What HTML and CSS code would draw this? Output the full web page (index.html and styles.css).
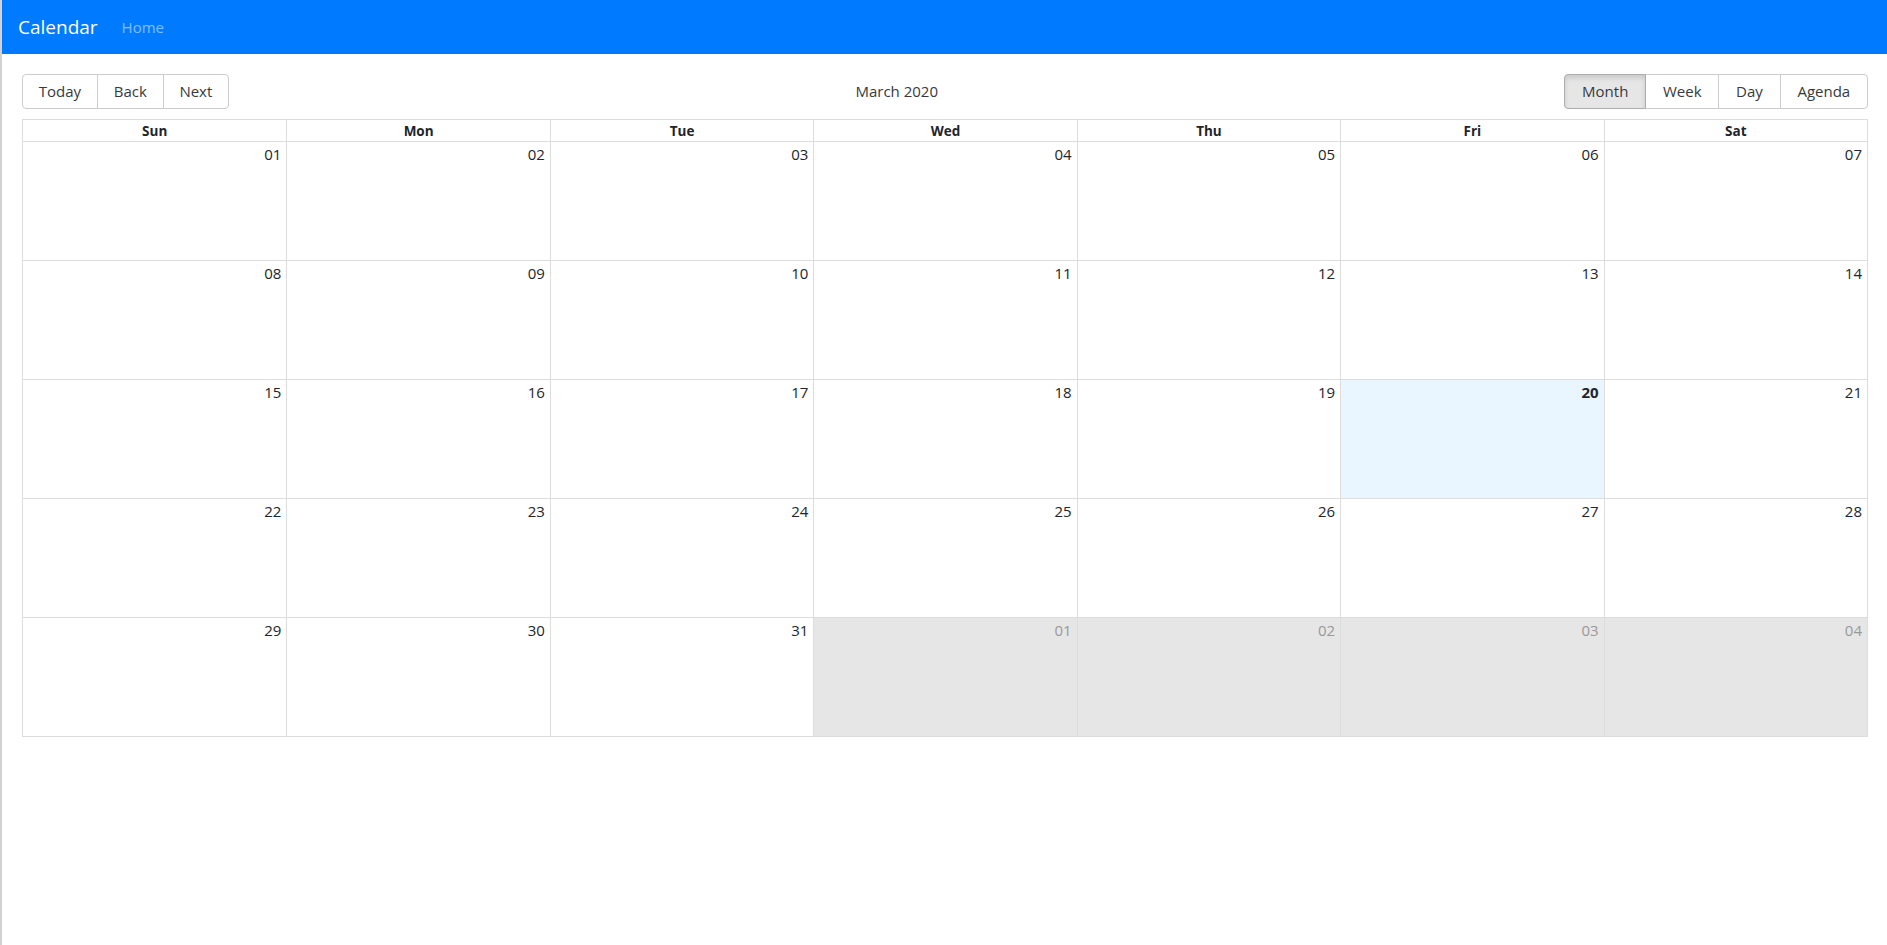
FILE: index.html
```html
<!DOCTYPE html>
<html lang="en">
<head>
<meta charset="utf-8">
<title>Calendar</title>
<link rel="stylesheet" href="styles.css">
</head>
<body>
<nav class="navbar">
  <a class="brand" href="#">Calendar</a>
  <a class="nav-link" href="#">Home</a>
</nav>
<main class="page">
  <div class="toolbar">
    <div class="btn-group">
      <button type="button">Today</button>
      <button type="button">Back</button>
      <button type="button">Next</button>
    </div>
    <span class="toolbar-label">March 2020</span>
    <div class="btn-group views">
      <button type="button" class="active">Month</button>
      <button type="button">Week</button>
      <button type="button">Day</button>
      <button type="button">Agenda</button>
    </div>
  </div>
  <div class="month">
    <div class="month-header">
      <div class="header">Sun</div>
      <div class="header">Mon</div>
      <div class="header">Tue</div>
      <div class="header">Wed</div>
      <div class="header">Thu</div>
      <div class="header">Fri</div>
      <div class="header">Sat</div>
    </div>
    <div class="month-row">
      <div class="day"><span class="date">01</span></div>
      <div class="day"><span class="date">02</span></div>
      <div class="day"><span class="date">03</span></div>
      <div class="day"><span class="date">04</span></div>
      <div class="day"><span class="date">05</span></div>
      <div class="day"><span class="date">06</span></div>
      <div class="day"><span class="date">07</span></div>
    </div>
    <div class="month-row">
      <div class="day"><span class="date">08</span></div>
      <div class="day"><span class="date">09</span></div>
      <div class="day"><span class="date">10</span></div>
      <div class="day"><span class="date">11</span></div>
      <div class="day"><span class="date">12</span></div>
      <div class="day"><span class="date">13</span></div>
      <div class="day"><span class="date">14</span></div>
    </div>
    <div class="month-row">
      <div class="day"><span class="date">15</span></div>
      <div class="day"><span class="date">16</span></div>
      <div class="day"><span class="date">17</span></div>
      <div class="day"><span class="date">18</span></div>
      <div class="day"><span class="date">19</span></div>
      <div class="day today"><span class="date now">20</span></div>
      <div class="day"><span class="date">21</span></div>
    </div>
    <div class="month-row">
      <div class="day"><span class="date">22</span></div>
      <div class="day"><span class="date">23</span></div>
      <div class="day"><span class="date">24</span></div>
      <div class="day"><span class="date">25</span></div>
      <div class="day"><span class="date">26</span></div>
      <div class="day"><span class="date">27</span></div>
      <div class="day"><span class="date">28</span></div>
    </div>
    <div class="month-row">
      <div class="day"><span class="date">29</span></div>
      <div class="day"><span class="date">30</span></div>
      <div class="day"><span class="date">31</span></div>
      <div class="day off-range"><span class="date">01</span></div>
      <div class="day off-range"><span class="date">02</span></div>
      <div class="day off-range"><span class="date">03</span></div>
      <div class="day off-range"><span class="date">04</span></div>
    </div>
  </div>
</main>
</body>
</html>
```

FILE: styles.css
```css
* {
  box-sizing: border-box;
}

html, body {
  margin: 0;
  padding: 0;
}

body {
  min-height: 100vh;
  border-left: 2px solid #d2d2d2;
  background: #fff;
  color: #212529;
  font-family: "Open Sans", "Noto Sans", sans-serif;
  font-size: 15px;
  line-height: 21px;
}

.navbar {
  height: 54px;
  background: #007bff;
  display: flex;
  align-items: center;
  padding: 0 16px;
}

.brand {
  color: #fff;
  text-decoration: none;
  font-size: 19px;
  line-height: 28px;
  margin-right: 16px;
}

.nav-link {
  color: rgba(255, 255, 255, 0.5);
  text-decoration: none;
  font-size: 15px;
  line-height: 24px;
  padding: 0 8px;
}

.page {
  padding: 20px 19px 20px 20px;
}

.toolbar {
  display: flex;
  align-items: center;
  margin-bottom: 10px;
}

.toolbar-label {
  flex-grow: 1;
  padding: 0 10px;
  text-align: center;
  color: #373a3c;
}

.btn-group {
  display: inline-flex;
  white-space: nowrap;
}

.btn-group button {
  font-family: inherit;
  font-size: 15px;
  line-height: 21px;
  color: #373a3c;
  background: none;
  border: 1px solid #ccc;
  padding: 6px 15.8px;
  margin: 0;
  border-radius: 0;
  cursor: pointer;
}

.btn-group.views button {
  padding: 6px 16.8px;
}

.btn-group button + button {
  margin-left: -1px;
}

.btn-group button:first-child {
  border-radius: 4px 0 0 4px;
}

.btn-group button:last-child {
  border-radius: 0 4px 4px 0;
}

.btn-group button.active {
  background: #e6e6e6;
  border-color: #adadad;
  box-shadow: inset 0 3px 5px rgba(0, 0, 0, 0.125);
  position: relative;
  z-index: 1;
}

.month {
  border: 1px solid #ddd;
}

.month-header {
  display: grid;
  grid-template-columns: repeat(7, 1fr);
  border-bottom: 1px solid #ddd;
}

.header {
  height: 21px;
  padding: 1px 3px 0;
  text-align: center;
  font-weight: bold;
  font-size: 13.5px;
  line-height: 20px;
  color: #212529;
}

.header + .header {
  border-left: 1px solid #ddd;
}

.month-row {
  display: grid;
  grid-template-columns: repeat(7, 1fr);
  height: 118px;
}

.month-row + .month-row {
  height: 119px;
  border-top: 1px solid #ddd;
}

.day {
  text-align: right;
  padding: 2px 5px 0 0;
}

.day + .day {
  border-left: 1px solid #ddd;
}

.date {
  line-height: 21px;
}

.today {
  background: #eaf6ff;
}

.now {
  font-weight: bold;
}

.off-range {
  background: #e6e6e6;
  color: #999;
}
```
